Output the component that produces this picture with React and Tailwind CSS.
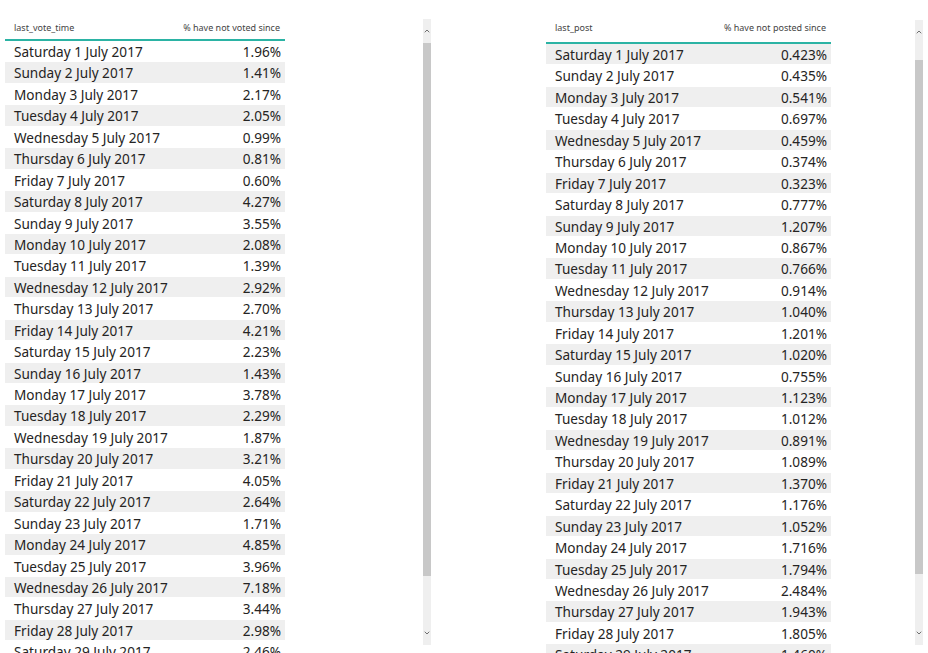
import { ChevronUp, ChevronDown } from "lucide-react";

const days = ["Saturday", "Sunday", "Monday", "Tuesday", "Wednesday", "Thursday", "Friday"];

const votes = [
  "1.96%", "1.41%", "2.17%", "2.05%", "0.99%", "0.81%", "0.60%", "4.27%", "3.55%", "2.08%",
  "1.39%", "2.92%", "2.70%", "4.21%", "2.23%", "1.43%", "3.78%", "2.29%", "1.87%", "3.21%",
  "4.05%", "2.64%", "1.71%", "4.85%", "3.96%", "7.18%", "3.44%", "2.98%", "2.46%",
];

const posts = [
  "0.423%", "0.435%", "0.541%", "0.697%", "0.459%", "0.374%", "0.323%", "0.777%", "1.207%", "0.867%",
  "0.766%", "0.914%", "1.040%", "1.201%", "1.020%", "0.755%", "1.123%", "1.012%", "0.891%", "1.089%",
  "1.370%", "1.176%", "1.052%", "1.716%", "1.794%", "2.484%", "1.943%", "1.805%", "1.460%",
];

const label = (i) => `${days[i % 7]} ${i + 1} July 2017`;

function Scrollbar({ thumbTop, thumbHeight, className }) {
  return (
    <div className={`w-2 bg-[#efefef] flex flex-col ${className}`}>
      <div className="h-6 flex items-center justify-center text-[#555]">
        <ChevronUp size={8} strokeWidth={2.5} />
      </div>
      <div style={{ marginTop: thumbTop, height: thumbHeight }} className="bg-[#c8c8c8]" />
      <div className="flex-1" />
      <div className="h-6 flex items-center justify-center text-[#555]">
        <ChevronDown size={8} strokeWidth={2.5} />
      </div>
    </div>
  );
}

function Table({ head1, head2, values, greyFirst, width, headerH, headerPb }) {
  return (
    <div style={{ width }} className="flex flex-col">
      <div style={{ height: headerH, paddingBottom: headerPb }} className="flex items-center justify-between pl-[9px] pr-[5px] text-[9px] text-[#444] border-b-2 border-[#2bb3a4]">
        <span>{head1}</span>
        <span>{head2}</span>
      </div>
      {values.map((v, i) => {
        const grey = greyFirst ? i % 2 === 0 : i % 2 === 1;
        return (
          <div
            key={i}
            className={`h-[21.44px] flex items-center justify-between pl-[9px] pr-[4px] pt-[2px] text-[13.6px] text-[#252423] border-b border-white ${grey ? "bg-[#efefef]" : "bg-white"}`}
          >
            <span>{label(i)}</span>
            <span>{v}</span>
          </div>
        );
      })}
    </div>
  );
}

export default function App() {
  return (
    <div className="w-[928px] h-[653px] overflow-hidden bg-white" style={{ fontFamily: '"Noto Sans", "Open Sans", sans-serif' }}>
      <div className="flex h-full">
        <div className="pl-[5px] pt-[19px]">
          <Table head1="last_vote_time" head2="% have not voted since" values={votes} greyFirst={false} width={280} headerH={22} headerPb={2} />
        </div>
        <div className="ml-[138px] pt-[19px] h-[645px] flex">
          <Scrollbar thumbTop={0} thumbHeight={533} className="h-[626px]" />
        </div>
        <div className="ml-[115px] pt-[18px]">
          <Table head1="last_post" head2="% have not posted since" values={posts} greyFirst={true} width={285} headerH={26} headerPb={5} />
        </div>
        <div className="ml-[84px] pt-[20px] flex">
          <Scrollbar thumbTop={16} thumbHeight={514} className="h-[625px]" />
        </div>
      </div>
    </div>
  );
}
